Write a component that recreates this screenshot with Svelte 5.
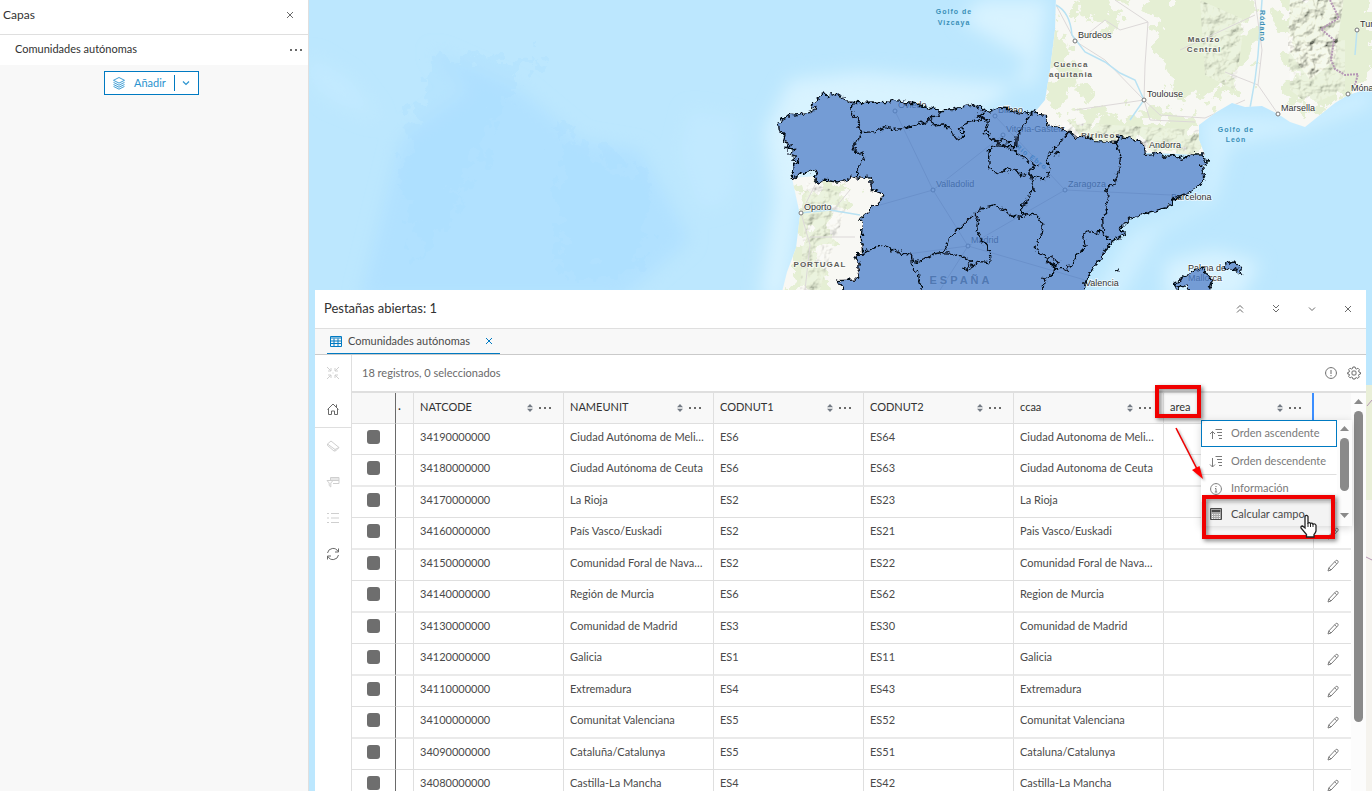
<script>
    let selectedTab = 'Comunidades autónomas';

    const columns = ['NATCODE', 'NAMEUNIT', 'CODNUT1', 'CODNUT2', 'ccaa', 'area'];

    const rows = [
        ['34190000000', 'Ciudad Autónoma de Melilla', 'ES6', 'ES64', 'Ciudad Autonoma de Melilla'],
        ['34180000000', 'Ciudad Autónoma de Ceuta', 'ES6', 'ES63', 'Ciudad Autonoma de Ceuta'],
        ['34170000000', 'La Rioja', 'ES2', 'ES23', 'La Rioja'],
        ['34160000000', 'País Vasco/Euskadi', 'ES2', 'ES21', 'Pais Vasco/Euskadi'],
        ['34150000000', 'Comunidad Foral de Navarra', 'ES2', 'ES22', 'Comunidad Foral de Navarra'],
        ['34140000000', 'Región de Murcia', 'ES6', 'ES62', 'Region de Murcia'],
        ['34130000000', 'Comunidad de Madrid', 'ES3', 'ES30', 'Comunidad de Madrid'],
        ['34120000000', 'Galicia', 'ES1', 'ES11', 'Galicia'],
        ['34110000000', 'Extremadura', 'ES4', 'ES43', 'Extremadura'],
        ['34100000000', 'Comunitat Valenciana', 'ES5', 'ES52', 'Comunitat Valenciana'],
        ['34090000000', 'Cataluña/Catalunya', 'ES5', 'ES51', 'Cataluna/Catalunya'],
        ['34080000000', 'Castilla-La Mancha', 'ES4', 'ES42', 'Castilla-La Mancha'],
    ];

    // x, y del punto; la etiqueta va arriba a la derecha
    const cities = [
        { name: 'Burdeos', x: 1075, y: 41 },
        { name: 'Toulouse', x: 1144, y: 100 },
        { name: 'Marsella', x: 1278, y: 114 },
        { name: 'Turín', x: 1357, y: 30 },
        { name: 'Mónaco', x: 1348, y: 94 },
        { name: 'Oporto', x: 801, y: 213 },
        { name: 'Oviedo', x: 895, y: 111 },
        { name: 'Bilbao', x: 995, y: 116 },
        { name: 'Vitoria-Gasteiz', x: 1003, y: 135 },
        { name: 'Valladolid', x: 933, y: 190 },
        { name: 'Zaragoza', x: 1065, y: 190 },
        { name: 'Madrid', x: 968, y: 246 },
    ];

    const spain = 'M97 299L97 275 95 262 115 242 92 240 106 228 90 222 103 208 85 210 98 194 78 207 82 188 70 183 75 165 66 155 58 152 55 130 66 120 80 112 92 102 108 105 125 100 145 98 165 92 168 80 152 84 155 70 178 52 190 42 200 48 215 38 235 45 250 55 262 66 300 68 340 66 375 68 400 60 425 66 470 72 505 84 545 92 570 90 610 80 640 75 665 86 682 96 712 84 742 86 770 98 790 100 822 93 835 103 863 107 860 130 870 135 925 152 945 172 980 168 1010 185 1070 187 1073 168 1115 175 1148 188 1157 223 1200 220 1215 232 1240 225 1265 235 1295 222 1327 222 1332 238 1342 242 1338 252 1324 255 1327 275 1334 298 1315 320 1280 340 1240 358 1225 382 1170 396 1110 415 1080 448 1094 460 1065 478 1055 485 1030 518 1000 565 975 605 970 720 270 720 260 640 232 602 290 600 298 570 296 550 288 527 308 520 304 470 307 430 300 415 325 395 335 385 355 372 370 345 350 332 334 328 332 290 300 295 270 288 265 300 230 306 190 300 175 311 163 295 172 278 165 268 145 275 115 285Z';

    const islands = 'M1243 612L1280 585 1310 570 1330 562 1334 577 1360 595 1345 640H1290L1278 615 1255 625ZM1394 552L1425 546 1438 557 1447 582 1428 572 1396 562ZM1072 570l3 4-1-6z';

    const regionBorders = [
        'M286 68 272 82 278 102 300 125 293 140 305 158 298 180 282 190 283 212 305 220 313 240 290 270 290 292',
        'M305 158 345 155 375 140 400 148 430 145 470 135 500 125 515 110 535 108 543 92',
        'M510 112 520 138 545 135 575 148 580 165 590 178 610 172 612 155 598 155 605 138 625 125 655 120 665 112 650 108 682 96',
        'M665 112 685 125 680 145 690 158 675 152 672 165 695 172 715 192 740 200 770 200 772 165 780 150 790 140 800 125 805 110 822 93',
        'M712 182 730 175 747 185 738 196 718 191Z',
        'M690 200 705 197 730 200 760 212 790 230 830 258 810 268 815 290 800 280 785 288 765 265 750 272 740 265 720 283 705 278 688 265 686 230Z',
        'M925 152 905 185 890 195 868 225 862 245 870 265 862 295 840 296 815 288 822 325 805 345 800 370 785 372 785 400 800 402',
        'M1073 168 1070 190 1082 225 1078 262 1070 290 1058 315 1040 330 1047 350 1038 375 1040 400 1028 410 1030 455 1045 475 1055 485',
        'M1030 455 1010 460 985 452 968 468 975 490 970 510 950 525 940 545 918 575 912 563 885 563',
        'M800 402 830 405 845 430 848 460 838 480 825 500 835 520 858 530 865 545 885 563 880 580 852 600 848 650',
        'M860 548 870 530 895 545 887 557Z',
        'M288 524 310 522 335 508 368 492 390 505 415 518 455 527 458 565 475 580 478 605 490 640',
        'M455 540 475 545 500 535 520 522 545 518 565 490 570 470 600 445 620 425 645 400 660 388 700 378 725 385 755 408 785 412 800 402',
        'M645 400 655 415 650 450 665 480 688 510 690 548 660 545 620 570 612 565 630 552 635 545 610 530 575 520 545 518',
        'M882 224 890 215 897 223Z',
    ];

    const sideTools = ['Centrar', 'Inicio', 'Borrar selección', 'Mostrar selección', 'Lista', 'Actualizar'];
</script>

{#snippet dots()}
    <svg width="13" height="4" viewBox="0 0 13 4" fill="#6a6a6a">
        <rect x="0" y="1" width="2" height="2" /><rect x="5" y="1" width="2" height="2" /><rect x="10" y="1" width="2" height="2" />
    </svg>
{/snippet}

{#snippet cross()}
    <svg width="8" height="8" viewBox="0 0 8 8" fill="none" stroke="currentColor"><path d="M1 1l6 6M7 1L1 7" /></svg>
{/snippet}

<div class="app">
    <aside class="layers">
        <header>
            <h2>Capas</h2>
            <button class="icon" aria-label="Cerrar">{@render cross()}</button>
        </header>
        <div class="layer">
            <span>Comunidades autónomas</span>
            <button class="icon" aria-label="Opciones">{@render dots()}</button>
        </div>
        <div class="add">
            <button class="add-main">
                <svg width="14" height="14" viewBox="0 0 14 14" fill="none" stroke="currentColor" stroke-width=".9">
                    <path d="M7 1.500l5.500 2.800L7 7.100 1.500 4.300zM1.500 6.400L7 9.200l5.500-2.800M1.500 8.500L7 11.200l5.500-2.700M1.500 10.400L7 13.200l5.500-2.800" />
                </svg>
                <span>Añadir</span>
            </button>
            <button class="add-more" aria-label="Más opciones">
                <svg width="8" height="6" viewBox="0 0 8 6" fill="none" stroke="currentColor" stroke-width="1.200"><path d="M1 1.500l3 3 3-3" /></svg>
            </button>
        </div>
    </aside>

    <main>
        <svg class="map" viewBox="309 0 1063 791" preserveAspectRatio="xMinYMin slice">
            <defs>
                <filter id="rough" x="-5%" y="-5%" width="110%" height="110%">
                    <feTurbulence type="fractalNoise" baseFrequency=".07" numOctaves="3" seed="4" />
                    <feDisplacementMap in="SourceGraphic" scale="22" xChannelSelector="R" yChannelSelector="G" />
                </filter>
                <filter id="patchy" x="-20%" y="-20%" width="140%" height="140%">
                    <feTurbulence type="fractalNoise" baseFrequency=".06" numOctaves="5" seed="9" />
                    <feDisplacementMap in="SourceGraphic" scale="55" xChannelSelector="R" yChannelSelector="G" />
                </filter>
                <filter id="soft" x="-20%" y="-20%" width="140%" height="140%"><feGaussianBlur stdDeviation="9" /></filter>
                <filter id="relief">
                    <feTurbulence type="fractalNoise" baseFrequency=".09" numOctaves="4" seed="12" result="n" />
                    <feDiffuseLighting in="n" surfaceScale="6" lighting-color="#fffdf2" diffuseConstant="1.300">
                        <feDistantLight azimuth="225" elevation="50" />
                    </feDiffuseLighting>
                    <feComposite in2="SourceGraphic" operator="in" />
                </filter>
                <clipPath id="land">
                    <path d="M1056 -5L1055 30 1050 70 1045 100 1035 112 1070 150 1205 155 1199 140 1199 125 1215 113 1232 103 1245 107 1262 106 1278 114 1290 122 1305 127 1320 115 1335 103 1348 95 1358 92 1372 88V-5ZM792 178L800 215 796 248 787 272 780 300H890V170Z" />
                </clipPath>
            </defs>

            <rect x="309" width="1063" height="791" fill="#bce7fe" />
            <g filter="url(#soft)">
                <path d="M430 50L470 90 400 140 385 200 360 300 620 300 690 240 640 150 580 140 520 90Z" fill="#b1e1ff" />
                <path d="M309 55L350 80 380 120 330 100 309 80Z" fill="#c3eaff" />
                <path d="M690 110L740 120 730 200 700 210 680 150Z" fill="#c1e9ff" />
                <path d="M765 130L790 80 860 72 980 82 1035 85 1048 0H980L960 20 1030 60 1000 100 800 200 785 300H760L775 200Z" fill="#d8f3ff" />
                <path d="M1205 155L1200 115 1290 118 1372 88V105L1300 132 1230 145 1215 200 1160 230 1120 300H1090L1130 235 1200 200Z" fill="#d0f0ff" />
                <path d="M1165 262L1215 250 1260 262 1240 300H1165Z" fill="#d8f3ff" />
            </g>
            <g filter="url(#patchy)" fill="#aadeff" opacity=".3">
                <path d="M430 60L540 55 500 110 450 220 420 250 400 180ZM560 130L650 180 640 270 560 280Z" />
            </g>
            <path d="M1345 385h40v180h-40z" fill="#e9efd8" />
            <path d="M1345 500h40v300h-40z" fill="#f5f3ee" />

            <!-- tierra: Francia y Portugal -->
            <g clip-path="url(#land)">
                <rect x="780" width="592" height="310" fill="#f8f8f4" />
                <g filter="url(#patchy)" fill="#e5efd4">
                    <path d="M1075 -10L1130 5 1110 30 1085 25ZM1050 20L1072 50 1085 95 1045 105ZM1150 -10L1250 -10 1255 50 1235 90 1180 105 1160 60ZM1060 120L1150 112 1200 125 1200 155 1090 145ZM1275 -10L1375 -10 1375 60 1345 100 1310 110 1285 90 1290 50ZM805 180L850 190 830 220 815 250 830 290 785 300Z" />
                </g>
                <g opacity=".5">
                    <path d="M1290 -10H1345L1335 60 1310 80 1288 50Z" filter="url(#relief)" />
                </g>
                <g opacity=".25">
                    <path d="M1288 45L1345 40 1345 90 1310 105 1290 90ZM1200 0L1245 20 1235 90 1205 75ZM1060 122L1200 130V158H1060ZM806 182L850 195 820 290 800 290Z" filter="url(#relief)" />
                </g>
                <path d="M1056 5L1075 41 1105 60 1144 100 1150 120 1195 122M1080 40L1105 20 1120 30 1148 22 1145 65 1144 100M1144 100L1075 110M1144 100L1160 115 1205 118M1245 100L1205 118M1255 0L1262 50 1258 85 1278 114M1258 85L1225 72M1180 50L1255 15M1115 0L1148 22M801 213L835 208 850 190M801 213L810 245 805 290M801 213L815 185M810 237H855" fill="none" stroke="#dcd8d8" />
                <path d="M1056 5Q1070 12 1072 35L1085 52 1105 62 1120 73 1135 80 1144 100 1130 120M1262 0L1258 55 1255 80 1250 108M1357 30L1355 55M800 213L830 210 860 215" fill="none" stroke="#b9e2f3" stroke-width="1.500" />
                <path d="M1330 0L1339 18 1321 29 1334 40 1331 60 1335 69 1345 75 1358 74 1355 85" fill="none" stroke="#b596b5" stroke-width="2" stroke-dasharray="2 1" />
            </g>
            <g fill="none" stroke="#b596b5"><path d="M1372 400L1367 406M1366 557l6 3" /></g>
            <path d={spain + islands} transform="translate(760 80) scale(.33333)" fill="#f4f5ee" filter="url(#rough)" />
            <path class="roads" d="M933 190L968 246M933 190L895 111M933 190L880 205M933 190L1003 135M968 246L1065 190 995 116M968 246L900 255M968 246L1085 280M1065 190L1171 195M968 246L940 290" />

            {#each cities as city}
                <circle cx={city.x} cy={city.y} r="2" fill="#fff" stroke="#777" />
            {/each}
            <g class="city">
                {#each cities as city}
                    <text x={city.x + 3} y={city.y - 3}>{city.name}</text>
                {/each}
                <text x="1149" y="148">Andorra</text>
                <text x="1171" y="200">Barcelona</text>
                <text x="1085" y="286">Valencia</text>
                <text x="1188" y="271">Palma de</text>
                <text x="1188" y="281">Mallorca</text>
            </g>
            <g class="area-label">
                <text x="1204" y="42">Macizo</text>
                <text x="1204" y="52">Central</text>
                <text x="1071" y="67">Cuenca</text>
                <text x="1071" y="77">aquitania</text>
                <text x="1101" y="138">Pirineos</text>
                <text x="820" y="267">PORTUGAL</text>
                <text class="big" x="961" y="284">ESPAÑA</text>
            </g>
            <g class="water">
                <text x="954" y="14">Golfo de</text>
                <text x="954" y="25">Vizcaya</text>
                <text x="1236" y="132">Golfo de</text>
                <text x="1236" y="142">León</text>
                <text transform="translate(1260 26) rotate(90)">Ródano</text>
                <text transform="translate(1030 159) rotate(37)">Río Ebro</text>
            </g>

            <g transform="translate(760 80) scale(.33333)" filter="url(#rough)">
                <path class="region" d={spain} />
                <path class="region" d={islands} />
                {#each regionBorders as d}
                    <path class="border" {d} />
                {/each}
            </g>
        </svg>

        <section class="dock">
            <header>
                <h1>Pestañas abiertas: 1</h1>
                <div class="dock-buttons">
                    <button class="icon" aria-label="Maximizar">
                        <svg width="8" height="10" viewBox="0 0 8 10"><path d="M1 4.500l3-3 3 3M1 8.500l3-3 3 3" /></svg>
                    </button>
                    <button class="icon" aria-label="Minimizar">
                        <svg width="8" height="10" viewBox="0 0 8 10"><path d="M1 1l3 3 3-3M1 5l3 3 3-3" /></svg>
                    </button>
                    <button class="icon" aria-label="Contraer">
                        <svg width="8" height="6" viewBox="0 0 8 6"><path d="M1 1.500l3 3 3-3" /></svg>
                    </button>
                    <button class="icon" aria-label="Cerrar panel">{@render cross()}</button>
                </div>
            </header>

            <nav>
                <div class="tab">
                    <svg width="12" height="11" viewBox="0 0 12 11" fill="none" stroke="#007ac2">
                        <path d="M.5.5h11v10H.5zM.5 2h11M.5 5h11M.5 7.500h11M4 2.500v8M8 2.500v8" />
                    </svg>
                    <span>{selectedTab}</span>
                    <button class="icon" aria-label="Cerrar pestaña">{@render cross()}</button>
                </div>
            </nav>

            <div class="body">
                <div class="tools">
                    {#each sideTools as tool, i}
                        <button class="icon tool-{i}" aria-label={tool}>
                            <svg width="14" height="14" viewBox="0 0 14 14">
                                {#if i === 0}
                                    <path d="M1 1l4 4M2 5h3V2M13 1L9 5M12 5H9V2M1 13l4-4M2 9h3v3M13 13L9 9M12 9H9v3M6.500 7h1" />
                                {:else if i === 1}
                                    <path d="M1.500 7.500L7 2l5.500 5.500M2.500 7v5.500h3V9h3v3.500h3V7M10.500 5V2.500" />
                                {:else if i === 2}
                                    <path d="M1.500 5L5 2l8 6.500-3.500 3.500H8L1.500 6.500zM1.500 5l7.500 5.500L13 8.500M9 10.500V12" />
                                {:else if i === 3}
                                    <path d="M4.500 5V2.500h8.500v6H7M5 4h8M5 5.500h8M1 5.500h6L4.800 8v4L3.200 10.500V8z" />
                                {:else if i === 4}
                                    <path d="M5 2.500h8M5 7h8M5 11.500h8M1 2.500h2M1 7h2M1 11.500h2" />
                                {:else}
                                    <path d="M1.500 6A5.600 5.600 0 0 1 12 4.500M12.500 1.500v3.500H9M12.500 8A5.600 5.600 0 0 1 2 9.500M1.500 12.500V9H5" />
                                {/if}
                            </svg>
                        </button>
                    {/each}
                </div>

                <div class="content">
                    <div class="status">
                        <span>18 registros, 0 seleccionados</span>
                        <button class="icon" aria-label="Información">
                            <svg width="12" height="12" viewBox="0 0 12 12"><path d="M6 .6a5.400 5.400 0 1 0 .01 0M6 3v4M6 8v1.200" /></svg>
                        </button>
                        <button class="icon" aria-label="Configuración">
                            <svg width="14" height="14" viewBox="0 0 14 14">
                                <path d="M5.900 1h2.200l.4 1.600 1 .4 1.400-.8 1.500 1.500-.8 1.400.4 1 1.500.4v1.500l-1.600.5-.4 1 .8 1.400-1.500 1.500-1.400-.8-1 .4L8.100 13H5.900l-.4-1.500-1-.4-1.400.8-1.500-1.500.8-1.400-.4-1L.7 8V6.500l1.400-.4.4-1-.9-1.400 1.500-1.500 1.400.8 1-.4z" />
                                <rect x="5" y="5" width="4" height="4" rx="1" />
                            </svg>
                        </button>
                    </div>

                    <div class="grid">
                        <div class="table-wrap">
                            <table>
                                <colgroup>
                                    <col class="c-check" /><col class="c-thin" />
                                    {#each columns as column}<col class="c-field" />{/each}
                                    <col />
                                </colgroup>
                                <thead>
                                    <tr>
                                        <th class="check"></th>
                                        <th class="thin">·</th>
                                        {#each columns as column}
                                            <th class:last={column === 'area'}>
                                                <div class="head">
                                                    <span>{column}</span>
                                                    <svg width="6" height="8" viewBox="0 0 6 8" fill="#747b85"><path d="M0 3.200L3 0l3 3.200zM0 4.800h6L3 8z" /></svg>
                                                    <button class="icon" aria-label="Opciones de {column}">{@render dots()}</button>
                                                </div>
                                            </th>
                                        {/each}
                                        <th></th>
                                    </tr>
                                </thead>
                                <tbody>
                                    {#each rows as row}
                                        <tr>
                                            <td class="check"><input type="checkbox" aria-label="Seleccionar {row[1]}" /></td>
                                            <td></td>
                                            {#each row as value}
                                                <td>{value}</td>
                                            {/each}
                                            <td></td>
                                            <td class="edit">
                                                <button class="icon" aria-label="Editar {row[1]}">
                                                    <svg width="12" height="13" viewBox="0 0 12 13"><path d="M1 12l.8-3L8.700 1.700Q9.800.8 10.800 1.800 11.600 2.800 10.800 3.800L4 11zM1.800 9L4 11M7.700 2.800l2 2" /></svg>
                                                </button>
                                            </td>
                                        </tr>
                                    {/each}
                                </tbody>
                            </table>
                        </div>
                        <div class="scrollbar">
                            <i class="up"></i>
                            <i class="thumb"></i>
                        </div>
                    </div>
                </div>
            </div>

            <div class="menu">
                <div class="items">
                    <button class="focused">
                        <svg width="14" height="14" viewBox="0 0 14 14"><path d="M3.500 12V4.500M1 7l2.500-2.500L6 7M6.500 2.500H13M8 5.500h5M9 8.500h4M10 11.500h3" /></svg>
                        <span>Orden ascendente</span>
                    </button>
                    <button class="group-end">
                        <svg width="14" height="14" viewBox="0 0 14 14"><path d="M3.500 4v9M1 10.500L3.500 13 6 10.500M6.500 2.500H13M8 5.500h5M9 8.500h4M10 11.500h3" /></svg>
                        <span>Orden descendente</span>
                    </button>
                    <button>
                        <svg width="14" height="14" viewBox="0 0 14 14"><path d="M7 1.600a5.400 5.400 0 1 0 .01 0M7 4v1M6 6.500h1V10M5.800 10h2.400" /></svg>
                        <span>Información</span>
                    </button>
                    <button class="hover">
                        <svg width="14" height="14" viewBox="0 0 14 14">
                            <path d="M1.500 1.500h11v11h-11z" fill="#a8a8a8" /><path d="M3 3.500h8v1H3z" />
                            <path d="M3 7.500h8M3 9.500h8M3 11.500h8" stroke="#fff" stroke-dasharray="1 1.300" />
                        </svg>
                        <span>Calcular campo</span>
                    </button>
                </div>
                <div class="scrollbar">
                    <i class="up"></i>
                    <i class="thumb"></i>
                    <i class="down"></i>
                </div>
            </div>

            <div class="mark field-mark"></div>
            <div class="mark menu-mark"></div>
            <svg class="arrow" width="36" height="58" viewBox="0 0 36 58">
                <path d="M3 3L24 44" stroke="#e00" stroke-width="1.600" />
                <path d="M30 54L19 45l7.500-4z" fill="#f00" />
            </svg>
            <svg class="pointer" width="18" height="24" viewBox="0 0 18 24">
                <path d="M5 2q2-1.500 3 .5V9q1.500-1 2.500.5 1.500-1 2.500.7 2-1 3 1V17q-.5 2-2 3.500V23H6.500v-2.500L1 14q-.5-2 1.500-2L5 14z" fill="#fff" stroke="#222" stroke-width="1.300" />
                <path d="M8 9v4M10.500 9.500V13M13 10v3" stroke="#222" />
            </svg>
        </section>
    </main>
</div>

<style>
    :global(body) {
        font-family: Lato, "Open Sans", sans-serif;
        font-size: 11px;
        color: #4a4a4a;
    }

    .app {
        display: flex;
        height: 100vh;
        overflow: hidden;
    }

    h1, h2 {
        margin: 0;
        padding-bottom: 2px;
        font-size: 13px;
        font-weight: 400;
        color: #323232;
    }

    button {
        font: inherit;
        color: inherit;
        border: 0;
        padding: 0;
        background: none;
        cursor: pointer;
    }

    .icon {
        display: flex;
        align-items: center;
        justify-content: center;
        color: #6a6a6a;
    }

    .icon svg, .menu svg {
        fill: none;
        stroke: currentColor;
        flex: none;
    }

    .layers {
        width: 308px;
        flex: none;
        background: #f8f8f8;
        border-right: 1px solid #dfdfdf;
    }

    .layers header {
        display: flex;
        align-items: center;
        justify-content: space-between;
        box-sizing: border-box;
        height: 35px;
        padding: 0 14px 4px 3px;
        background: #fff;
        border-bottom: 1px solid #dfdfdf;
    }

    .layers h2 {
        font-size: 12px;
    }

    .layer {
        display: flex;
        align-items: center;
        justify-content: space-between;
        height: 30px;
        padding: 0 5px 0 15px;
        background: #fff;
        color: #323232;
    }

    .layer span {
        padding-bottom: 4px;
    }

    .layer svg, .head button svg {
        fill: #6a6a6a;
        stroke: none;
    }

    .add {
        display: flex;
        align-items: center;
        width: 93px;
        height: 22px;
        margin: 6px 0 0 104px;
        border: 1px solid #007ac2;
        background: #fff;
        color: #2b93cf;
    }

    .add-main {
        display: flex;
        align-items: center;
        gap: 8px;
        padding: 0 8px 0 7px;
    }

    .add-main span, .tab span, .items span {
        padding-bottom: 2px;
    }

    .add-more {
        display: flex;
        align-items: center;
        justify-content: center;
        flex: 1;
        height: 16px;
        border-left: 1px solid #007ac2;
    }

    main {
        position: relative;
        flex: 1;
        min-width: 0;
        padding: 290px 6px 0;
    }

    .map {
        position: absolute;
        inset: 0;
        width: 100%;
        height: 100%;
    }

    .map text {
        font-family: "Liberation Sans", Arial, sans-serif;
        font-size: 9px;
        fill: #333;
        paint-order: stroke;
        stroke: rgba(255, 255, 255, .7);
        stroke-width: 1.5px;
    }

    .area-label text, .water text {
        text-anchor: middle;
        letter-spacing: 1px;
    }

    .map .area-label text {
        font-weight: 700;
        font-size: 8px;
        fill: #5c5c58;
    }

    .map .area-label .big {
        font-size: 11px;
        letter-spacing: 3px;
    }

    .map .water text {
        font-size: 7px;
        font-weight: 700;
        fill: #3a8fb7;
        stroke: none;
    }

    .roads {
        fill: none;
        stroke: #c9c4c4;
    }

    .region {
        fill: rgba(76, 129, 205, .76);
        stroke: #050a14;
        stroke-width: 4;
    }

    .border {
        fill: none;
        stroke: #050a14;
        stroke-width: 4;
    }

    .dock {
        position: relative;
        display: flex;
        flex-direction: column;
        height: calc(100vh - 290px);
        background: #fff;
    }

    .dock > header {
        display: flex;
        align-items: center;
        justify-content: space-between;
        height: 38px;
        flex: none;
        padding: 0 14px 0 9px;
        border-bottom: 1px solid #dfdfdf;
    }

    .dock-buttons {
        display: flex;
        gap: 28px;
    }

    nav {
        display: flex;
        height: 25px;
        flex: none;
        padding-left: 12px;
        background: #f8f8f8;
        border-bottom: 1px solid #cacaca;
    }

    .tab {
        display: flex;
        align-items: center;
        gap: 6px;
        width: 170px;
        padding-left: 3px;
        border-bottom: 1px solid #007ac2;
    }

    .tab button {
        margin-left: 9px;
        color: #007ac2;
    }

    .body {
        display: flex;
        flex: 1;
        min-height: 0;
    }

    .tools {
        width: 36px;
        flex: none;
        border-right: 1px solid #dfdfdf;
    }

    .tools button {
        width: 100%;
        height: 36px;
        color: #cfcfcf;
    }

    .tools .tool-1, .tools .tool-5 {
        color: #6a6a6a;
    }

    .tools .tool-1 {
        height: 37px;
        border-bottom: 1px solid #dfdfdf;
    }

    .content {
        display: flex;
        flex-direction: column;
        flex: 1;
        min-width: 0;
    }

    .status {
        display: flex;
        align-items: center;
        gap: 10px;
        height: 36px;
        flex: none;
        padding: 0 5px 0 10px;
        border-bottom: 2px solid #dfdfdf;
        color: #6a6a6a;
    }

    .status span {
        flex: 1;
        padding-bottom: 2px;
    }

    .grid {
        display: flex;
        flex: 1;
        min-height: 0;
    }

    .table-wrap {
        flex: 1;
        min-width: 0;
        overflow: hidden;
    }

    table {
        width: 100%;
        table-layout: fixed;
        border-collapse: separate;
        border-spacing: 0;
    }

    .c-check {
        width: 44px;
    }

    .c-thin {
        width: 18px;
    }

    .c-field {
        width: 150px;
    }

    th, td {
        box-sizing: border-box;
        padding: 0 8px 0 6px;
        border-right: 1px solid #dfdfdf;
        border-bottom: 1px solid #dfdfdf;
        font-weight: 400;
        text-align: left;
        white-space: nowrap;
        overflow: hidden;
        text-overflow: ellipsis;
    }

    th {
        height: 31px;
        background: #f8f8f8;
        color: #323232;
    }

    td {
        height: 31px;
        padding-bottom: 6px;
    }

    tbody tr:nth-child(even) td {
        height: 32px;
        border-bottom: 2px solid #eaeaea;
    }

    th:last-child, td:last-child {
        border-right: 0;
    }

    .check {
        padding: 0 14px 4px;
        border-right-color: #6a6a6a;
    }

    .thin {
        padding: 0 2px;
    }

    .last {
        border-right: 2px solid #3b8eff;
    }

    .last .head {
        padding-right: 2px;
    }

    .head {
        display: flex;
        align-items: center;
        gap: 6px;
        padding-right: 3px;
    }

    .head span {
        flex: 1;
        padding-bottom: 3px;
    }

    input {
        display: block;
        appearance: none;
        width: 13px;
        height: 14px;
        margin: 0 0 0 1px;
        border-radius: 3px;
        background: #6e6e6e;
    }

    .edit {
        padding: 0 0 0 13px;
    }

    .edit svg {
        stroke: #7d7d7d;
    }

    .scrollbar {
        display: flex;
        flex-direction: column;
        align-items: center;
        width: 15px;
        flex: none;
        padding-top: 6px;
        background: #fcfcfc;
    }

    .scrollbar i {
        width: 9px;
    }

    .up, .down {
        height: 5px;
        background: #8a8a8a;
        clip-path: polygon(50% 0, 100% 100%, 0 100%);
    }

    .down {
        clip-path: polygon(0 0, 100% 0, 50% 100%);
    }

    .thumb {
        height: 311px;
        margin: 7px 0;
        border-radius: 5px;
        background: #8a8a8a;
    }

    .menu {
        position: absolute;
        left: 886px;
        top: 130px;
        display: flex;
        width: 151px;
        background: #fff;
        box-shadow: 0 2px 8px rgba(0, 0, 0, .16);
    }

    .items {
        flex: 1;
    }

    .items button {
        display: flex;
        align-items: center;
        gap: 8px;
        box-sizing: border-box;
        width: 136px;
        height: 27px;
        padding-left: 7px;
        border: 1px solid transparent;
        color: #7a7a7a;
        white-space: nowrap;
    }

    .items .focused {
        border-color: #007ac2;
    }

    .items .group-end {
        height: 28px;
        border-bottom-color: #dfdfdf;
    }

    .items .hover {
        height: 24px;
        width: 100%;
        background: #f3f3f3;
        color: #4a4a4a;
    }

    .menu .thumb {
        height: 53px;
        margin: 7px 0 22px;
    }

    .mark {
        position: absolute;
        box-sizing: border-box;
        border: 4px solid #f00000;
        filter: drop-shadow(2px 2px 2px rgba(0, 0, 0, .5));
    }

    .field-mark {
        left: 840px;
        top: 95px;
        width: 46px;
        height: 33px;
    }

    .menu-mark {
        left: 887px;
        top: 205px;
        width: 133px;
        height: 44px;
    }

    .arrow {
        position: absolute;
        left: 858px;
        top: 135px;
        filter: drop-shadow(2px 2px 1px rgba(0, 0, 0, .3));
    }

    .pointer {
        position: absolute;
        left: 985px;
        top: 224px;
        fill: none;
    }
</style>
